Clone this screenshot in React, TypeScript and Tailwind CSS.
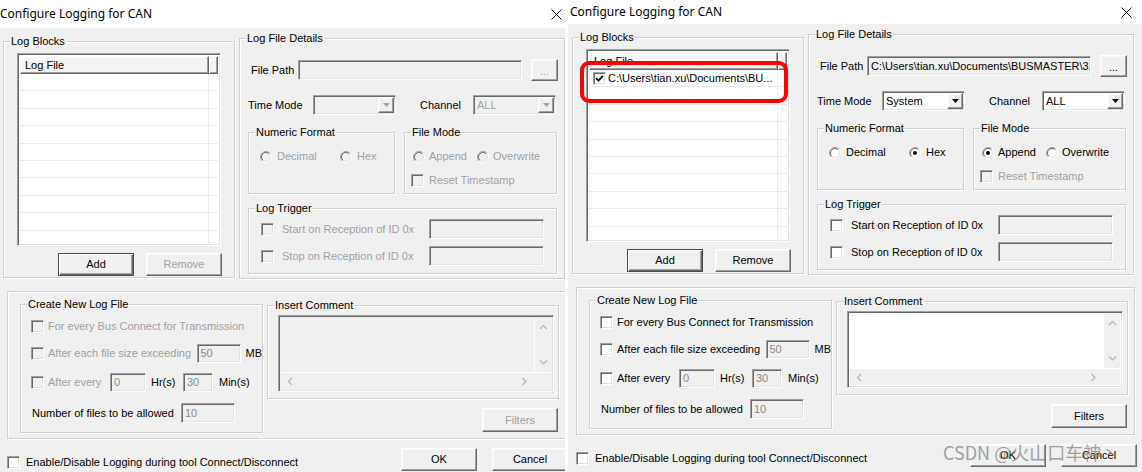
import React from 'react';

// classic win32 bevels
const SUNKEN =
  'border border-t-[#a0a0a0] border-l-[#a0a0a0] border-b-white border-r-white shadow-[inset_1px_1px_0_#696969,inset_-1px_-1px_0_#e3e3e3]';
const RAISED =
  'border border-t-white border-l-white border-b-[#696969] border-r-[#696969] shadow-[inset_-1px_-1px_0_#a0a0a0,inset_1px_1px_0_#f8f8f8]';
const DEFAULT_BTN =
  'border border-[#4a4a4a] shadow-[inset_1px_1px_0_#fff,inset_-1px_-1px_0_#696969,inset_-2px_-2px_0_#a0a0a0]';
const GRAY = 'text-[#a0a0a0]';

const LOG_PATH = 'C:\\Users\\tian.xu\\Documents\\BU...';
const FILE_PATH = 'C:\\Users\\tian.xu\\Documents\\BUSMASTER\\3.';

function Group({ title, className, children }: { title: string; className: string; children?: React.ReactNode }) {
  return (
    <div className={`relative shrink-0 border border-[#d0d0d0] shadow-[inset_1px_1px_0_#fff,1px_1px_0_#fff] ${className}`}>
      <span className="absolute -top-[7px] left-[6px] bg-[#f0f0f0] px-[1px] leading-[13px] text-black">{title}</span>
      {children}
    </div>
  );
}

function Check({ checked, on }: { checked?: boolean; on: boolean }) {
  return (
    <span className={`flex h-[13px] w-[13px] shrink-0 items-center justify-center ${SUNKEN} ${on ? 'bg-white' : 'bg-[#f0f0f0]'}`}>
      {checked && (
        <svg width="9" height="9" viewBox="0 0 9 9">
          <path d="M1 4.2 L3.4 6.6 L8 1.8" stroke="#000" strokeWidth="1.8" fill="none" />
        </svg>
      )}
    </span>
  );
}

function Radio({ checked, on }: { checked?: boolean; on: boolean }) {
  return (
    <svg width="12" height="12" viewBox="0 0 12 12" className="shrink-0">
      <circle cx="6" cy="6" r="5.5" fill={on ? '#fff' : '#f0f0f0'} />
      <path d="M2.1 9.9 A5.5 5.5 0 0 1 9.9 2.1" fill="none" stroke="#a0a0a0" />
      <path d="M2.8 9.2 A4.5 4.5 0 0 1 9.2 2.8" fill="none" stroke="#696969" />
      <path d="M9.9 2.1 A5.5 5.5 0 0 1 2.1 9.9" fill="none" stroke="#fff" />
      <path d="M9.2 2.8 A4.5 4.5 0 0 1 2.8 9.2" fill="none" stroke="#e3e3e3" />
      {checked && <circle cx="6" cy="6" r="2" fill="#000" />}
    </svg>
  );
}

function Field({ className, value, dark }: { className: string; value?: string; dark?: boolean }) {
  return (
    <div className={`flex shrink-0 items-center overflow-hidden whitespace-nowrap bg-[#f0f0f0] pl-[3px] ${SUNKEN} ${dark ? 'text-black' : 'text-[#8a8a8a]'} ${className}`}>
      {value}
    </div>
  );
}

function Combo({ value, on }: { value: string; on: boolean }) {
  return (
    <div className={`flex h-[20px] w-[83px] shrink-0 items-stretch p-[1px] ${SUNKEN} ${on ? 'bg-white' : 'bg-[#f0f0f0]'}`}>
      <span className={`flex flex-1 items-center pl-[2px] ${on ? 'text-black' : GRAY}`}>{value}</span>
      <span className={`flex w-[16px] items-center justify-center bg-[#f0f0f0] ${RAISED}`}>
        <svg width="7" height="4" viewBox="0 0 7 4">
          <path d="M0 0 H7 L3.5 4 Z" fill={on ? '#000' : '#a0a0a0'} />
        </svg>
      </span>
    </div>
  );
}

function Btn({ children, className, disabled, def }: { children: React.ReactNode; className: string; disabled?: boolean; def?: boolean }) {
  return (
    <div className={`flex shrink-0 items-center justify-center bg-[#f0f0f0] ${def ? DEFAULT_BTN : RAISED} ${disabled ? GRAY : 'text-black'} ${className}`}>
      {children}
    </div>
  );
}

function Chevron({ dir }: { dir: 'up' | 'down' | 'left' | 'right' }) {
  const d = {
    up: 'M1 5 L4.5 1.5 L8 5',
    down: 'M1 1.5 L4.5 5 L8 1.5',
    left: 'M5 1 L1.5 4.5 L5 8',
    right: 'M1.5 1 L5 4.5 L1.5 8',
  }[dir];
  const vertical = dir === 'up' || dir === 'down';
  return (
    <svg width={vertical ? 9 : 7} height={vertical ? 7 : 9} viewBox={vertical ? '0 0 9 7' : '0 0 7 9'}>
      <path d={d} stroke="#b4b4b4" strokeWidth="1.2" fill="none" />
    </svg>
  );
}

function ListBox({ on }: { on: boolean }) {
  const rows = Array.from({ length: 11 }, (_, i) => i);
  return (
    <div className={`ml-[13px] mt-[11px] flex h-[193px] w-[204px] flex-col overflow-hidden bg-white p-[2px] ${SUNKEN}`}>
      <div className="flex h-[18px] shrink-0">
        <div className={`flex flex-1 items-center bg-[#f4f4f4] pl-[4px] ${RAISED}`}>Log File</div>
        <div className={`w-[9px] bg-[#f4f4f4] ${RAISED}`} />
      </div>
      {rows.map((i) => (
        <div key={i} className="flex h-[17.4px] shrink-0 border-b border-[#ececec]">
          <div className="flex flex-1 items-center overflow-hidden whitespace-nowrap border-r border-[#ececec] pl-[4px]">
            {on && i === 0 && (
              <>
                <Check checked on />
                <span className="ml-[2px]">{LOG_PATH}</span>
              </>
            )}
          </div>
          <div className="w-[9px]" />
        </div>
      ))}
    </div>
  );
}

function Memo({ on }: { on: boolean }) {
  return (
    <div className={`ml-[10px] mt-[9px] flex h-[77px] w-[276px] flex-col p-[2px] ${SUNKEN} ${on ? 'bg-white' : 'bg-[#f0f0f0]'}`}>
      <div className="flex flex-1">
        <div className="flex-1" />
        <div className="flex w-[17px] flex-col items-center justify-between border-l border-white bg-[#f0f0f0] py-[6px]">
          <Chevron dir="up" />
          <Chevron dir="down" />
        </div>
      </div>
      <div className="flex h-[17px] border-t border-white bg-[#f0f0f0]">
        <div className="flex flex-1 items-center justify-between px-[6px]">
          <Chevron dir="left" />
          <Chevron dir="right" />
        </div>
        <div className="w-[17px]" />
      </div>
    </div>
  );
}

function LoggingDialog({ on }: { on: boolean }) {
  const lbl = on ? 'text-black' : GRAY;
  return (
    <div className="flex h-full w-full flex-col">
      <div className={`flex shrink-0 items-center justify-between bg-white ${on ? 'h-[24px] pl-[5px]' : 'h-[28px] pl-0'}`}>
        <span className="font-['Noto_Sans',sans-serif] text-[12px] text-black">Configure Logging for CAN</span>
        <svg width="11" height="11" viewBox="0 0 11 11" className={on ? 'mr-[10px]' : 'mr-[3px]'}>
          <path d="M0.5 0.5 L10.5 10.5 M10.5 0.5 L0.5 10.5" stroke="#111" strokeWidth="1" />
        </svg>
      </div>
      <div className={`flex-1 bg-[#f0f0f0] ${on ? 'ml-[3px] pl-[1px]' : 'ml-0 pl-0'}`}>
        <div className="w-[575px]">
          {/* top row */}
          <div className="flex items-start">
            <Group title="Log Blocks" className="ml-[3px] mt-[13px] h-[237px] w-[232px]">
              <ListBox on={on} />
              <div className="mt-[7px] flex">
                <Btn def className="ml-[54px] h-[23px] w-[76px]">Add</Btn>
                <Btn disabled={!on} className="ml-[12px] h-[23px] w-[76px]">Remove</Btn>
              </div>
            </Group>

            <Group title="Log File Details" className="ml-[4px] mt-[10px] h-[241px] w-[326px]">
              <div className="ml-[11px] mt-[20px] flex h-[22px] items-center">
                <span className="w-[47px]">File Path</span>
                <Field className="h-[20px] w-[224px]" value={on ? FILE_PATH : ''} dark />
                <Btn disabled={!on} className="ml-[9px] h-[22px] w-[27px] pt-[2px]">...</Btn>
              </div>
              <div className="ml-[8px] mt-[14px] flex h-[20px] items-center">
                <span className="w-[65px]">Time Mode</span>
                <Combo value={on ? 'System' : ''} on={on} />
                <span className="ml-[24px] w-[53px]">Channel</span>
                <Combo value="ALL" on={on} />
              </div>
              <div className="ml-[8px] mt-[17px] flex">
                <Group title="Numeric Format" className="h-[62px] w-[147px]">
                  <div className="ml-[11px] mt-[17px] flex h-[13px] items-center">
                    <Radio on={on} />
                    <span className={`ml-[5px] w-[63px] ${lbl}`}>Decimal</span>
                    <Radio on={on} checked={on} />
                    <span className={`ml-[5px] ${lbl}`}>Hex</span>
                  </div>
                </Group>
                <Group title="File Mode" className="ml-[9px] h-[62px] w-[153px]">
                  <div className="ml-[8px] mt-[17px] flex h-[13px] items-center">
                    <Radio on={on} checked={on} />
                    <span className={`ml-[4px] w-[48px] ${lbl}`}>Append</span>
                    <Radio on={on} />
                    <span className={`ml-[4px] ${lbl}`}>Overwrite</span>
                  </div>
                  <div className="ml-[6px] mt-[11px] flex h-[13px] items-center">
                    <Check on={false} />
                    <span className={`ml-[5px] ${GRAY}`}>Reset Timestamp</span>
                  </div>
                </Group>
              </div>
              <Group title="Log Trigger" className="ml-[8px] mt-[14px] h-[66px] w-[309px]">
                <div className="ml-[12px] mr-[12px] mt-[10px] flex h-[20px] items-center">
                  <Check on={on} />
                  <span className={`ml-[8px] ${lbl}`}>Start on Reception of ID 0x</span>
                  <Field className="ml-auto h-[20px] w-[115px]" />
                </div>
                <div className="ml-[12px] mr-[12px] mt-[7px] flex h-[20px] items-center">
                  <Check on={on} />
                  <span className={`ml-[8px] ${lbl}`}>Stop on Reception of ID 0x</span>
                  <Field className="ml-auto h-[20px] w-[115px]" />
                </div>
              </Group>
            </Group>
          </div>

          {/* bottom box */}
          <div className="ml-[7px] mt-[12px] flex h-[148px] w-[559px] items-start border border-[#d0d0d0] shadow-[inset_1px_1px_0_#fff,1px_1px_0_#fff]">
            <Group title="Create New Log File" className="ml-[12px] mt-[12px] h-[129px] w-[243px]">
              <div className="ml-[10px] mt-[12px] flex h-[19px] items-center">
                <Check on={on} />
                <span className={`ml-[4px] ${lbl}`}>For every Bus Connect for Transmission</span>
              </div>
              <div className="ml-[10px] mt-[8px] flex h-[19px] items-center">
                <Check on={on} />
                <span className={`ml-[4px] w-[149px] ${lbl}`}>After each file size exceeding</span>
                <Field className="h-[19px] w-[44px]" value="50" />
                <span className="ml-[5px]">MB</span>
              </div>
              <div className="ml-[10px] mt-[10px] flex h-[19px] items-center">
                <Check on={on} />
                <span className={`ml-[4px] w-[62px] ${lbl}`}>After every</span>
                <Field className="h-[19px] w-[36px]" value="0" />
                <span className="ml-[5px] w-[32px]">Hr(s)</span>
                <Field className="h-[19px] w-[30px]" value="30" />
                <span className="ml-[6px]">Min(s)</span>
              </div>
              <div className="ml-[11px] mt-[11px] flex h-[20px] items-center">
                <span className="w-[149px]">Number of files to be allowed</span>
                <Field className="h-[20px] w-[54px]" value="10" />
              </div>
            </Group>
            <div className="ml-[4px] mt-[13px] flex w-[292px] flex-col">
              <Group title="Insert Comment" className="h-[94px] w-[292px]">
                <Memo on={on} />
              </Group>
              <Btn disabled={!on} className="mr-[1px] mt-[9px] h-[24px] w-[76px] self-end">Filters</Btn>
            </div>
          </div>

          {/* footer */}
          <div className="mt-[9px] flex items-start">
            <div className="ml-[7px] mt-[8px] flex h-[13px] items-center">
              <Check on />
              <span className="ml-[6px]">Enable/Disable Logging during tool Connect/Disconnect</span>
            </div>
            <Btn className="ml-auto h-[23px] w-[76px]">OK</Btn>
            <Btn className="ml-[15px] mr-[7px] h-[23px] w-[76px]">Cancel</Btn>
          </div>
        </div>
      </div>
    </div>
  );
}

export default function App() {
  return (
    <div className="relative h-[472px] w-[1142px] overflow-hidden bg-white font-['Liberation_Sans',Arial,sans-serif] text-[11px] text-black">
      <div className="absolute left-0 top-0 h-[472px] w-[565px] overflow-hidden">
        <LoggingDialog on={false} />
      </div>
      <div className="absolute left-[565px] top-0 h-[472px] w-[577px] overflow-hidden">
        <LoggingDialog on />
      </div>
      {/* red highlight drawn over the first log block */}
      <div className="absolute left-[580px] top-[61px] h-[42px] w-[208px] rounded-[9px] border-[4px] border-[#ff0000]" />
      <div className="absolute left-[943px] top-[440px] whitespace-nowrap font-['Noto_Sans_CJK_SC',sans-serif] text-[18px] leading-[24px] text-[#8c8c8c] opacity-80">
        CSDN @火山口车神丶
      </div>
    </div>
  );
}
